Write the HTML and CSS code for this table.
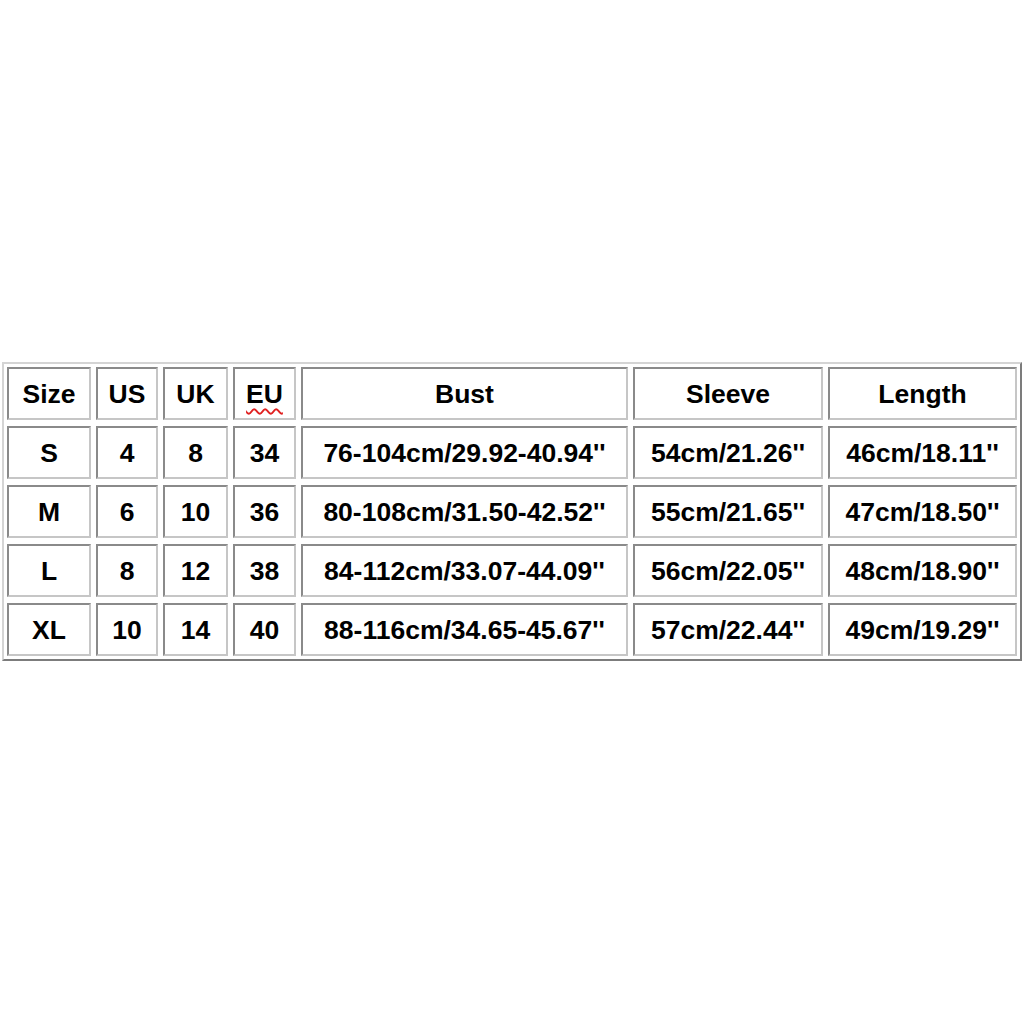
FILE: index.html
```html
<!DOCTYPE html>
<html>
<head>
<meta charset="utf-8">
<link rel="stylesheet" href="styles.css">
</head>
<body>
<div class="chart">
  <div class="cell">Size</div>
  <div class="cell">US</div>
  <div class="cell">UK</div>
  <div class="cell"><span class="spell">EU</span></div>
  <div class="cell">Bust</div>
  <div class="cell">Sleeve</div>
  <div class="cell">Length</div>

  <div class="cell">S</div>
  <div class="cell">4</div>
  <div class="cell">8</div>
  <div class="cell">34</div>
  <div class="cell">76-104cm/29.92-40.94''</div>
  <div class="cell">54cm/21.26''</div>
  <div class="cell">46cm/18.11''</div>

  <div class="cell">M</div>
  <div class="cell">6</div>
  <div class="cell">10</div>
  <div class="cell">36</div>
  <div class="cell">80-108cm/31.50-42.52''</div>
  <div class="cell">55cm/21.65''</div>
  <div class="cell">47cm/18.50''</div>

  <div class="cell">L</div>
  <div class="cell">8</div>
  <div class="cell">12</div>
  <div class="cell">38</div>
  <div class="cell">84-112cm/33.07-44.09''</div>
  <div class="cell">56cm/22.05''</div>
  <div class="cell">48cm/18.90''</div>

  <div class="cell">XL</div>
  <div class="cell">10</div>
  <div class="cell">14</div>
  <div class="cell">40</div>
  <div class="cell">88-116cm/34.65-45.67''</div>
  <div class="cell">57cm/22.44''</div>
  <div class="cell">49cm/19.29''</div>
</div>
</body>
</html>
```
FILE: styles.css
```css
html, body {
  margin: 0;
  padding: 0;
  background: #ffffff;
}
body {
  width: 1024px;
  height: 1024px;
  display: flex;
  justify-content: center;
  align-items: flex-start;
  font-family: "Liberation Sans", Arial, sans-serif;
}
.chart {
  margin-top: 362px;
  display: grid;
  grid-template-columns: 84px 62px 65px 63px 327px 190px 189px;
  grid-auto-rows: 53px;
  column-gap: 5px;
  row-gap: 6px;
  padding: 3px;
  border-style: solid;
  border-width: 2px;
  border-color: #d4d4d4 #7c7c7c #7c7c7c #d4d4d4;
}
.cell {
  box-sizing: border-box;
  display: flex;
  align-items: center;
  justify-content: center;
  padding-top: 2px;
  border-style: solid;
  border-width: 2px;
  border-color: #8a8a8a #c6c6c6 #c6c6c6 #8a8a8a;
  font-weight: bold;
  font-size: 26.5px;
  color: #000000;
  white-space: nowrap;
}
.spell {
  text-decoration-line: underline;
  text-decoration-style: wavy;
  text-decoration-color: #e02020;
  text-decoration-thickness: 1.5px;
  text-underline-offset: 5px;
}
```
